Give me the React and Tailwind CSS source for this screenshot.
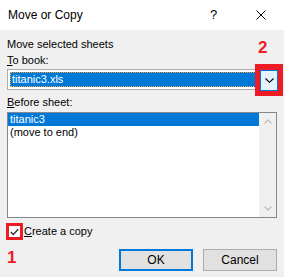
import React from "react";

export default function App() {
  return (
    <div className="relative w-[284px] h-[277px] bg-[#f0f0f0] overflow-hidden text-[11px] text-black" style={{ fontFamily: '"Liberation Sans", Arial, sans-serif' }}>
      {/* Title bar */}
      <div className="h-[30px] bg-white flex items-center">
        <div className="pl-[8px] flex-1 text-[12px] leading-[15px]">Move or Copy</div>
        <div className="w-[46px] h-[30px] flex items-center justify-center text-[13px] pr-[3px]">?</div>
        <div className="w-[46px] h-[30px] flex items-center justify-center">
          <svg width="10" height="10" viewBox="0 0 10 10">
            <path d="M0.5 0.5 L9.5 9.5 M9.5 0.5 L0.5 9.5" stroke="#000" strokeWidth="1" fill="none" />
          </svg>
        </div>
      </div>

      <div className="px-[7px] pt-[7px] flex flex-col">
        <div className="leading-[15px]">Move selected sheets</div>
        <div className="leading-[15px] mt-[1px]"><span className="underline">T</span>o book:</div>
        {/* Combo */}
        <div className="relative mt-[1px] h-[21px] bg-white border border-[#acacac] flex items-stretch">
          <div className="flex-1 p-[2px] pr-[1px]">
            <div className="h-full bg-[#0078d7] border border-dotted border-[#f5a040] text-white leading-[13px] pl-[1px]">titanic3.xls</div>
          </div>
          <div className="w-[17px]" />
        </div>
        <div className="leading-[15px] mt-[5px]"><span className="underline">B</span>efore sheet:</div>
        {/* List */}
        <div className="mt-[2px] h-[106px] bg-white border border-[#828790] flex">
          <div className="flex-1 flex flex-col">
            <div className="h-[13px] bg-[#0078d7] text-white leading-[13px] pl-[2px]">titanic3</div>
            <div className="h-[13px] leading-[13px] pl-[2px]">(move to end)</div>
          </div>
          <div className="w-[17px] bg-[#f0f0f0] flex flex-col items-center justify-between py-[6px]">
            <svg width="8" height="5" viewBox="0 0 8 5">
              <path d="M0.5 4.5 L4 1 L7.5 4.5" stroke="#c0c0c0" strokeWidth="1.3" fill="none" />
            </svg>
            <svg width="8" height="5" viewBox="0 0 8 5">
              <path d="M0.5 0.5 L4 4 L7.5 0.5" stroke="#c0c0c0" strokeWidth="1.3" fill="none" />
            </svg>
          </div>
        </div>
        {/* Checkbox row */}
        <div className="mt-[5px] flex items-center h-[17px]">
          <div className="w-[17px] h-[17px] bg-[#ed1c24] flex items-center justify-center -ml-[1px]">
            <div className="w-[11px] h-[11px] bg-white flex items-center justify-center">
              <svg width="9" height="8" viewBox="0 0 9 8">
                <path d="M0.8 4 L3.3 6.5 L8.2 1.2" stroke="#333" strokeWidth="1.4" fill="none" />
              </svg>
            </div>
          </div>
          <div className="ml-[1px] leading-[15px]"><span className="underline">C</span>reate a copy</div>
        </div>
        {/* Bottom row */}
        <div className="mt-[9px] flex items-start">
          <div className="flex-1 text-[#ed1c24] font-bold text-[17px] leading-[17px]">1</div>
          <div className="w-[74px] h-[22px] bg-[#e1e1e1] border-2 border-[#0078d7] flex items-center justify-center text-[12px]">OK</div>
          <div className="ml-[10px] w-[74px] h-[22px] bg-[#e1e1e1] border border-[#adadad] flex items-center justify-center text-[12px]">Cancel</div>
        </div>
      </div>

      {/* Annotation: red frame around dropdown button */}
      <div className="absolute left-[255px] top-[64px] w-[28px] h-[32px] bg-[#ed1c24] flex items-center justify-center">
        <div className="w-[18px] h-[21px] bg-[#e5f1fb] border border-[#0078d7] flex items-center justify-center">
          <svg width="9" height="5" viewBox="0 0 9 5">
            <path d="M0.5 0.5 L4.5 4.3 L8.5 0.5" stroke="#000" strokeWidth="1.1" fill="none" />
          </svg>
        </div>
      </div>
      <div className="absolute left-[258px] top-[39px] text-[#ed1c24] font-bold text-[17px] leading-[17px]">2</div>
    </div>
  );
}
